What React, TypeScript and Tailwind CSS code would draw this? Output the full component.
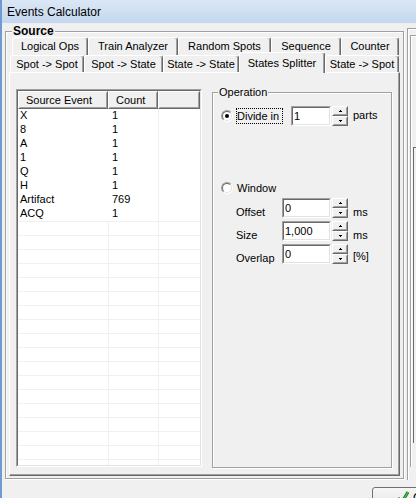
import React from 'react'

const backTabs = [
  { label: 'Logical Ops', w: 'w-[76px]' },
  { label: 'Train Analyzer', w: 'w-[90px]' },
  { label: 'Random Spots', w: 'w-[93px]' },
  { label: 'Sequence', w: 'w-[70px]' },
  { label: 'Counter', w: 'w-[58px]' },
]

const frontTabs = [
  { label: 'Spot -> Spot', w: 'w-[74px]', selected: false },
  { label: 'Spot -> State', w: 'w-[79px]', selected: false },
  { label: 'State -> State', w: 'w-[76px]', selected: false },
  { label: 'States Splitter', w: 'w-[86px]', selected: true },
  { label: 'State -> Spot', w: 'w-[74px]', selected: false },
]

const events = [
  ['X', '1'],
  ['8', '1'],
  ['A', '1'],
  ['1', '1'],
  ['Q', '1'],
  ['H', '1'],
  ['Artifact', '769'],
  ['ACQ', '1'],
]

function Raised({ className = '', children }: { className?: string; children?: React.ReactNode }) {
  return (
    <div className={`border border-t-white border-l-white border-r-[#696969] border-b-[#696969] ${className}`}>
      <div className="h-full w-full border border-t-[#f0f0f0] border-l-[#f0f0f0] border-r-[#a0a0a0] border-b-[#a0a0a0] bg-[#f0f0f0]">
        {children}
      </div>
    </div>
  )
}

function Sunken({ className = '', children }: { className?: string; children?: React.ReactNode }) {
  return (
    <div className={`border border-t-[#a0a0a0] border-l-[#a0a0a0] border-r-white border-b-white ${className}`}>
      <div className="h-full w-full border border-t-[#696969] border-l-[#696969] border-r-[#e3e3e3] border-b-[#e3e3e3] bg-white overflow-hidden">
        {children}
      </div>
    </div>
  )
}

function Arrow({ up }: { up?: boolean }) {
  return (
    <svg width="3" height="2" viewBox="0 0 3 2" shapeRendering="crispEdges">
      {up ? (
        <>
          <rect x="1" y="0" width="1" height="1" fill="#000" />
          <rect x="0" y="1" width="3" height="1" fill="#000" />
        </>
      ) : (
        <>
          <rect x="0" y="0" width="3" height="1" fill="#000" />
          <rect x="1" y="1" width="1" height="1" fill="#000" />
        </>
      )}
    </svg>
  )
}

function SpinEdit({ value, w }: { value: string; w: string }) {
  return (
    <div className="flex h-[20px] shrink-0">
      <Sunken className={`${w} h-full`}>
        <div className="pl-[1px] pt-[1px] leading-[14px]">{value}</div>
      </Sunken>
      <div className="ml-px flex w-[16px] flex-col">
        <Raised className="h-[10px]">
          <div className="flex h-full items-center justify-center">
            <Arrow up />
          </div>
        </Raised>
        <Raised className="h-[10px]">
          <div className="flex h-full items-center justify-center">
            <Arrow />
          </div>
        </Raised>
      </div>
    </div>
  )
}

function Radio({ checked }: { checked?: boolean }) {
  return (
    <div className="h-[12px] w-[12px] shrink-0 rounded-full border border-t-[#a0a0a0] border-l-[#a0a0a0] border-r-white border-b-white">
      <div className="flex h-full w-full items-center justify-center rounded-full border border-t-[#696969] border-l-[#696969] border-r-[#e3e3e3] border-b-[#e3e3e3] bg-white">
        {checked && <div className="h-[4px] w-[4px] rounded-full bg-black" />}
      </div>
    </div>
  )
}

function EventList() {
  const empty = Array.from({ length: 18 })
  return (
    <Sunken className="mt-[4px] h-[378px] w-[186px] shrink-0">
      <div className="flex h-[18px]">
        <Raised className="h-full w-[90px]">
          <div className="pl-[6px] leading-[14px]">Source Event</div>
        </Raised>
        <Raised className="h-full w-[50px]">
          <div className="pl-[6px] leading-[14px]">Count</div>
        </Raised>
        <Raised className="h-full flex-1" />
      </div>
      {events.map(([name, count]) => (
        <div key={name} className="flex h-[14px] leading-[13px]">
          <div className="w-[90px] pl-[2px]">{name}</div>
          <div className="w-[50px] pl-[4px]">{count}</div>
          <div className="flex-1 border-l border-[#f0f0f0]" />
        </div>
      ))}
      {empty.map((_, i) => (
        <div key={i} className="flex h-[14px] border-t border-[#f0f0f0]">
          <div className="w-[90px]" />
          <div className="w-[50px] border-l border-[#f0f0f0]" />
          <div className="flex-1 border-l border-[#f0f0f0]" />
        </div>
      ))}
    </Sunken>
  )
}

function OperationBox() {
  return (
    <fieldset className="ml-[10px] h-[383px] w-[180px] min-w-0 shrink-0 border border-[#a0a0a0] shadow-[inset_1px_1px_0_#fff,1px_1px_0_#fff]">
      <legend className="ml-[5px] bg-[#f0f0f0] px-[1px] leading-[14px]">Operation</legend>
      <div className="mt-[7px] flex h-[20px] items-start pl-[8px]">
        <div className="mt-[4px]">
          <Radio checked />
        </div>
        <div className="ml-[3px] mt-[2px] h-[16px] w-[47px] border border-dotted border-black leading-[14px]">
          Divide in
        </div>
        <div className="ml-[8px]">
          <SpinEdit value="1" w="w-[40px]" />
        </div>
        <div className="ml-[5px] pt-[2px] leading-[14px]">parts</div>
      </div>

      <div className="mt-[54px] flex h-[16px] items-center pl-[8px]">
        <Radio />
        <div className="ml-[4px] leading-[14px]">Window</div>
      </div>

      <div className="mt-[2px] flex flex-col gap-[3px] pl-[23px]">
        {[
          ['Offset', '0', 'ms'],
          ['Size', '1,000', 'ms'],
          ['Overlap', '0', '[%]'],
        ].map(([label, value, unit]) => (
          <div key={label} className="flex h-[20px] items-start">
            <div className="w-[46px] pt-[7px] leading-[14px]">{label}</div>
            <SpinEdit value={value} w="w-[49px]" />
            <div className={`ml-[5px] leading-[14px] ${unit === 'ms' ? 'pt-[7px]' : 'pt-[5px]'}`}>{unit}</div>
          </div>
        ))}
      </div>
    </fieldset>
  )
}

function Tab({ label, w, selected }: { label: string; w: string; selected?: boolean }) {
  return (
    <div
      className={`${w} shrink-0 rounded-t-[3px] border-t border-l border-r border-t-white border-l-white border-r-[#696969] bg-[#f0f0f0] text-center leading-[14px] shadow-[inset_-1px_0_0_#a0a0a0] ${
        selected ? 'relative z-10 -mb-px h-[21px] pt-[3px]' : 'h-full pt-[1px]'
      }`}
    >
      {label}
    </div>
  )
}

function CheckIcon() {
  return (
    <svg width="16" height="16" viewBox="0 0 16 16">
      <path d="M2 8 L6 12 L12 2" fill="none" stroke="#1d7a1d" strokeWidth="3" strokeLinejoin="round" />
      <path d="M2 8 L6 12 L12 2" fill="none" stroke="#4fc44f" strokeWidth="1.2" strokeLinejoin="round" />
    </svg>
  )
}

export default function App() {
  return (
    <div className="flex h-[498px] w-[416px] overflow-hidden bg-[#f0f0f0] font-['Liberation_Sans',Arial,sans-serif] text-[11px] text-black">
      <div className="w-[2px] shrink-0 bg-[#6f9bd1]" />
      <div className="flex min-w-0 flex-1 flex-col">
        <div className="h-[23px] shrink-0 bg-linear-to-b from-[#dbe7f5] to-[#c4d7ee] pl-[5px] text-[12px] leading-[25px]">
          Events Calculator
        </div>

        <div className="flex shrink-0 items-start">
          <fieldset className="ml-[3px] mt-[1px] h-[455px] w-[399px] min-w-0 shrink-0 border border-[#a0a0a0] shadow-[inset_1px_1px_0_#fff,1px_1px_0_#fff]">
            <legend className="ml-[6px] bg-[#f0f0f0] px-[1px] text-[12px] font-bold leading-[14px]">Source</legend>

            <div className="-mt-px flex h-[18px] pl-[6px]">
              {backTabs.map((t) => (
                <Tab key={t.label} label={t.label} w={t.w} />
              ))}
            </div>
            <div className="flex h-[17px] items-end pl-[4px]">
              {frontTabs.map((t) => (
                <Tab key={t.label} label={t.label} w={t.w} selected={t.selected} />
              ))}
            </div>

            <div className="ml-[3px] h-[404px] w-[391px] border border-t-white border-l-white border-r-[#696969] border-b-[#696969]">
              <div className="flex h-full items-start border-r border-b border-r-[#a0a0a0] border-b-[#a0a0a0] pl-[6px] pt-[12px]">
                <EventList />
                <OperationBox />
              </div>
            </div>
          </fieldset>

          <div className="ml-[3px] mt-[5px] h-[452px] flex-1 border-l border-t border-[#a0a0a0] shadow-[inset_1px_1px_0_#fff]">
            <div className="ml-[2px] mt-[6px] h-[432px] border-l border-t border-[#a0a0a0] shadow-[inset_1px_1px_0_#fff]">
              <div className="ml-[2px] mt-[111px] h-[296px] border-l border-t border-l-[#696969] border-t-[#696969] bg-[#f0f0f0]" />
            </div>
          </div>
        </div>

        <div className="ml-[370px] mt-[7px] flex h-[30px] w-[80px] shrink-0 rounded-[3px] border border-[#707070] bg-linear-to-b from-[#f6f6f6] to-[#dddddd] pl-[23px] pt-[2px]">
          <CheckIcon />
          <span className="ml-[1px] leading-[16px] text-[12px]">OK</span>
        </div>
      </div>
    </div>
  )
}
